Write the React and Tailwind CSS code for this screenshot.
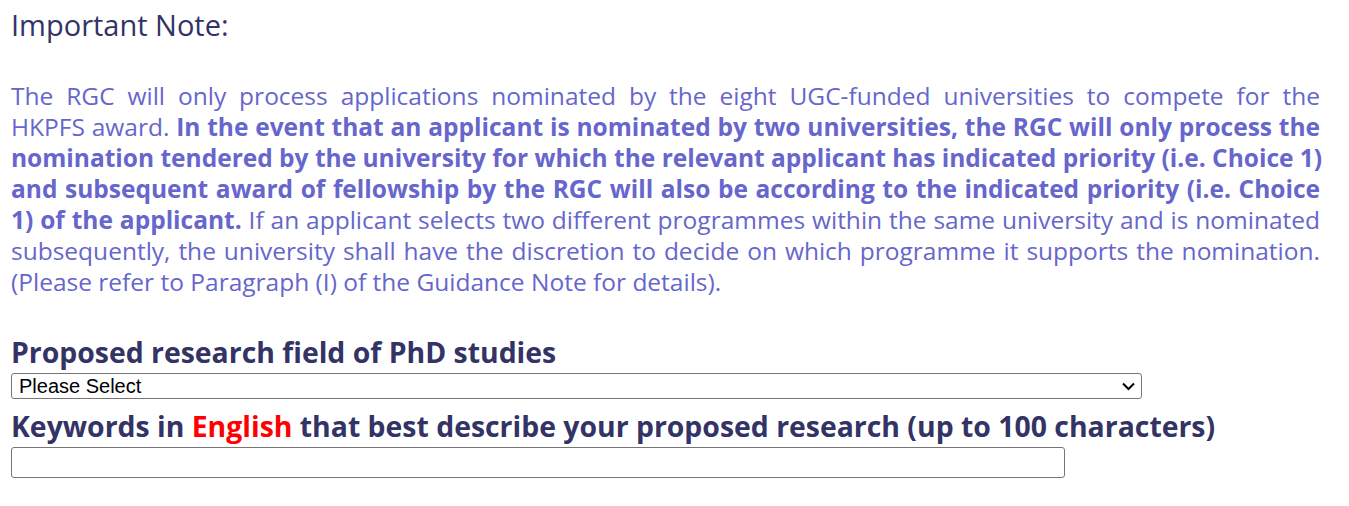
import React from "react";

const lines = [
  [["The RGC will only process applications nominated by the eight UGC-funded universities to compete for the", false]],
  [
    ["HKPFS award. ", false],
    ["In the event that an applicant is nominated by two universities, the RGC will only process the", true],
  ],
  [["nomination tendered by the university for which the relevant applicant has indicated priority (i.e. Choice 1)", true]],
  [["and subsequent award of fellowship by the RGC will also be according to the indicated priority (i.e. Choice", true]],
  [
    ["1) of the applicant.", true],
    [" If an applicant selects two different programmes within the same university and is nominated", false],
  ],
  [["subsequently, the university shall have the discretion to decide on which programme it supports the nomination.", false]],
];

export default function App() {
  return (
    <div className="bg-white min-h-[506px] pl-[11px] pt-[9px] font-['Open_Sans',sans-serif]">
      <h2 className="text-[29px] leading-[32px] text-[#333366]">Important Note:</h2>

      <div className="mt-[39px] w-[1309px] text-[24.5px] leading-[31px] text-[#6666cc]">
        {lines.map((line, i) => (
          <div key={i} className="whitespace-nowrap text-justify [text-align-last:justify]">
            {line.map(([t, b], j) => (
              <span key={j} className={b ? "font-bold" : ""}>
                {t}
              </span>
            ))}
          </div>
        ))}
        <div>(Please refer to Paragraph (I) of the Guidance Note for details).</div>
      </div>

      <h3 className="mt-[38px] text-[28.4px] leading-[34px] font-bold text-[#333366]">
        Proposed research field of PhD studies
      </h3>
      <div className="relative mt-[4px] w-[1131px]">
        <div className="h-[26px] border border-[#767676] rounded-[3px] pl-[7px] flex items-center font-['Liberation_Sans',sans-serif] text-[20px] text-black">
          Please Select
        </div>
        <svg
          className="absolute right-[7px] top-[8px]"
          width="13"
          height="10"
          viewBox="0 0 13 10"
          fill="none"
          stroke="black"
          strokeWidth="2"
        >
          <path d="M1 2.5 L6.5 8 L12 2.5" />
        </svg>
      </div>

      <h3 className="mt-[10px] text-[28.4px] leading-[34px] font-bold text-[#333366]">
        Keywords in <span className="text-[#ff0000]">English</span> that best describe your proposed research (up to
        100 characters)
      </h3>
      <div className="mt-[4px] w-[1054px] h-[31px] border border-[#767676] rounded-[3px]" />
    </div>
  );
}
